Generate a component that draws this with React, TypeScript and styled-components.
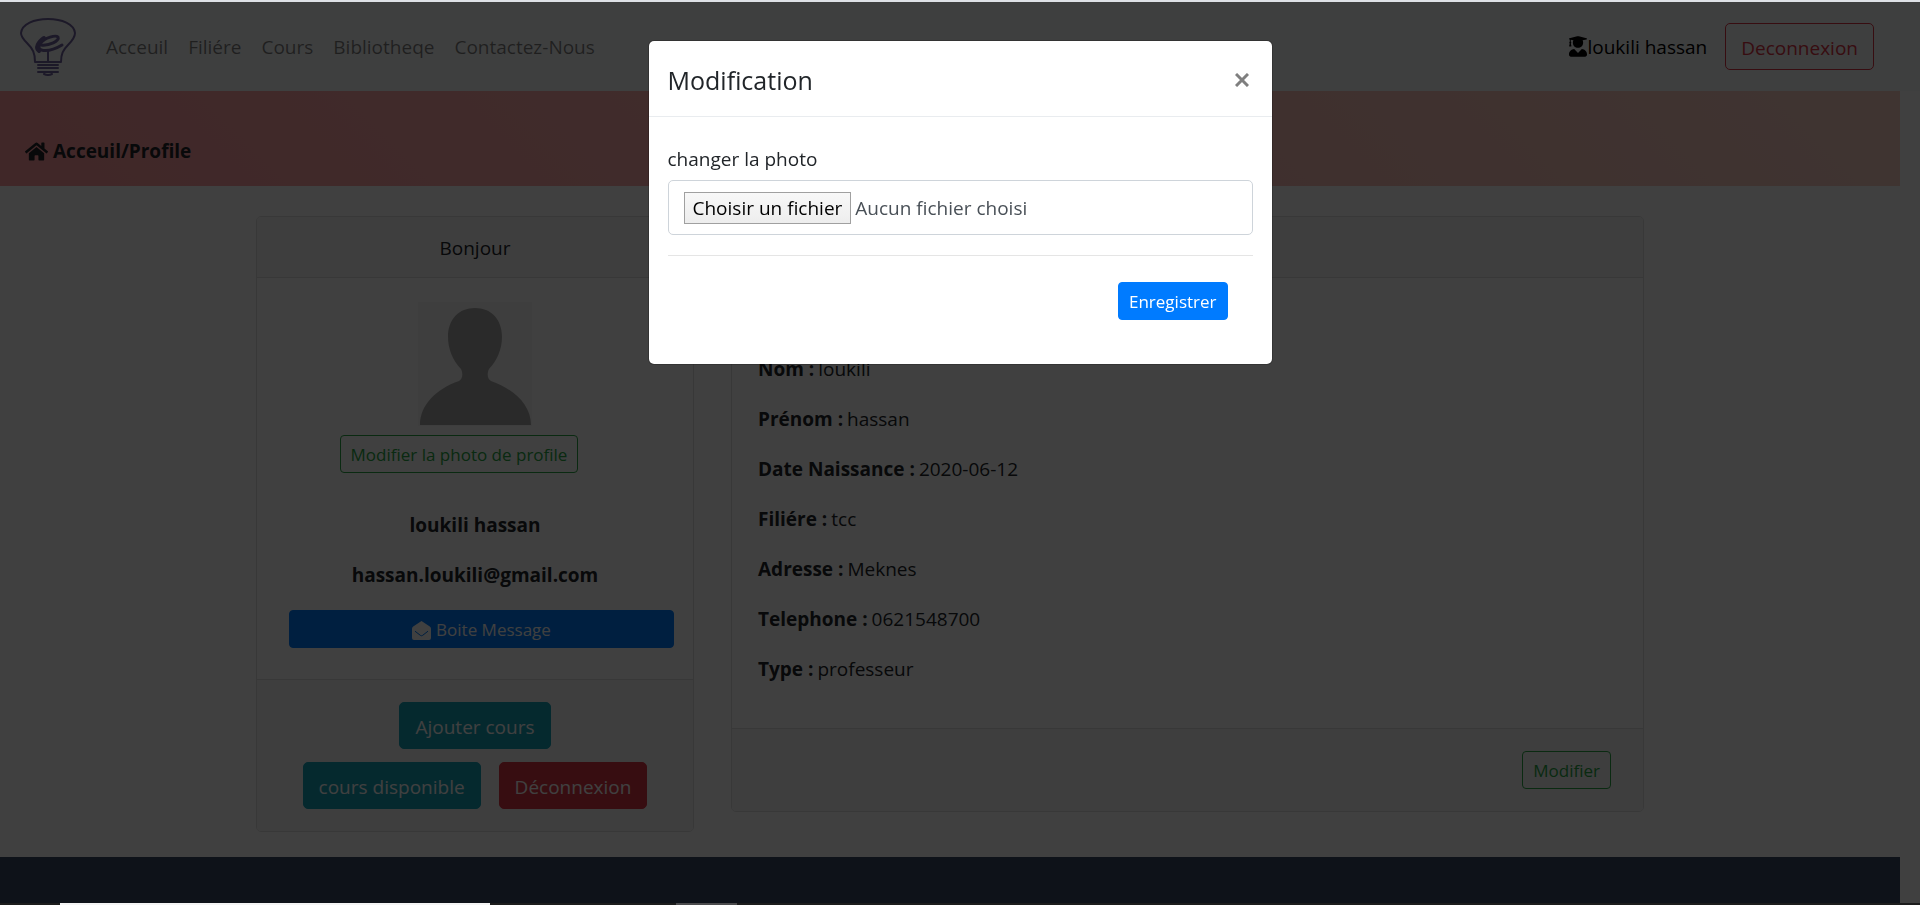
import React from "react";
import styled, { createGlobalStyle, css } from "styled-components";
import { FaHome, FaUserGraduate } from "react-icons/fa";

const GlobalStyle = createGlobalStyle`
  *, *::before, *::after { box-sizing: border-box; }
  body {
    margin: 0;
    background: #fff;
    color: #212529;
    font-family: "Open Sans", "Noto Sans", sans-serif;
    font-size: 19px;
    line-height: 30px;
  }
  p, h5 { margin: 0; }
  button, input { font-family: inherit; }
`;

const Page = styled.div`
  display: flex;
  flex-direction: column;
  min-height: 100vh;
`;

const TopEdge = styled.div`
  position: relative;
  z-index: 20;
  height: 2px;
  background: #dee1e6;
`;

const TaskEdge = styled.div`
  position: relative;
  z-index: 20;
  display: flex;
  height: 2px;
  padding-left: 60px;
  background: #1c1c1c;
`;

const TaskItem = styled.span<{ $width: number; $gap?: number; $color: string }>`
  width: ${(p) => p.$width}px;
  margin-left: ${(p) => p.$gap ?? 0}px;
  background: ${(p) => p.$color};
`;

const Navbar = styled.header`
  display: flex;
  align-items: center;
  height: 89px;
  padding: 0 46px 0 20px;
  background: #f8f9fa;
`;

const Brand = styled.a`
  display: flex;
  margin-right: 20px;
`;

const NavLinks = styled.nav`
  display: flex;
  flex: 1;
`;

const NavLink = styled.a`
  padding: 0 10px;
  color: rgba(0, 0, 0, 0.5);
  text-decoration: none;
`;

const UserLink = styled.a`
  display: flex;
  align-items: center;
  margin-right: 18px;
  color: #000;
  text-decoration: none;

  svg {
    width: 18px;
    height: 21px;
  }
`;

type Tone = "primary" | "info" | "danger" | "outlineDanger" | "outlineSuccess";

const tones = {
  primary: css`background: #007bff; border-color: #007bff; color: #fff;`,
  info: css`background: #17a2b8; border-color: #17a2b8; color: #fff;`,
  danger: css`background: #dc3545; border-color: #dc3545; color: #fff;`,
  outlineDanger: css`background: transparent; border-color: #dc3545; color: #dc3545;`,
  outlineSuccess: css`background: transparent; border-color: #28a745; color: #28a745;`,
};

const Button = styled.button<{ $tone: Tone; $small?: boolean }>`
  display: inline-flex;
  align-items: center;
  justify-content: center;
  gap: 5px;
  height: ${(p) => (p.$small ? 38 : 47)}px;
  padding: 2px ${(p) => (p.$small ? 10 : 15)}px 0;
  border: 1px solid;
  border-radius: ${(p) => (p.$small ? 4 : 5)}px;
  font-size: ${(p) => (p.$small ? 17 : 19)}px;
  line-height: 26px;
  white-space: nowrap;
  cursor: pointer;
  ${(p) => tones[p.$tone]}
`;

const Content = styled.div`
  display: flex;
  flex: 1;
  flex-direction: column;
  margin-right: 20px;
`;

const Banner = styled.div`
  display: flex;
  align-items: center;
  gap: 5px;
  padding: 45px 25px 20px;
  background: linear-gradient(45deg, #ff9a9e 0%, #fad0c4 99%, #fad0c4 100%);
  color: #212529;
  font-weight: 700;
`;

const Columns = styled.main`
  display: grid;
  grid-template-columns: 438fr 913fr;
  align-items: start;
  gap: 37px;
  width: 100%;
  max-width: 1388px;
  margin: 30px auto 25px;
`;

const Card = styled.section`
  border: 1px solid #dfdfdf;
  border-radius: 5px;
  overflow: hidden;
`;

const CardHeader = styled.div`
  height: 61px;
  padding: 16px 25px 14px;
  background: #f7f7f7;
  border-bottom: 1px solid #dfdfdf;
  text-align: center;
`;

const ProfileBody = styled.div`
  display: flex;
  flex-direction: column;
  align-items: center;
  padding: 24px 25px 31px;
`;

const PhotoAction = styled.div`
  display: flex;
  margin: 9px 32px 37px 0;
`;

const Strong = styled.p`
  margin-bottom: 20px;
  font-weight: 700;
`;

const MessageAction = styled.div`
  display: grid;
  align-self: stretch;
  margin: 0 -6px 0 7px;
`;

const CardFooter = styled.div<{ $align: "center" | "flex-end" }>`
  display: flex;
  flex-direction: column;
  align-items: ${(p) => p.$align};
  gap: 13px;
  padding: 22px 32px;
  background: #f7f7f7;
  border-top: 1px solid #dfdfdf;
`;

const ButtonRow = styled.div`
  display: flex;
  gap: 18px;
`;

const DetailsBody = styled.dl`
  display: grid;
  gap: 20px;
  margin: 0;
  padding: 76px 26px 44px;
`;

const Detail = styled.div`
  display: flex;
  gap: 4px;
`;

const DetailName = styled.dt`
  font-weight: 700;
`;

const DetailValue = styled.dd`
  margin: 0;
`;

const Footer = styled.footer`
  flex: 1;
  min-height: 46px;
  background: #3b4a66;
`;

const Backdrop = styled.div`
  position: fixed;
  inset: 0;
  z-index: 10;
  display: flex;
  align-items: flex-start;
  justify-content: center;
  padding-top: 40px;
  background: rgba(0, 0, 0, 0.75);
`;

const Modal = styled.div`
  width: 100%;
  max-width: 625px;
  background: #fff;
  background-clip: padding-box;
  border: 1px solid rgba(0, 0, 0, 0.2);
  border-radius: 6px;
`;

const ModalHeader = styled.div`
  display: flex;
  align-items: center;
  justify-content: space-between;
  height: 76px;
  padding: 3px 19px 0;
  border-bottom: 1px solid #e9ecef;
`;

const ModalTitle = styled.h5`
  font-size: 25px;
  font-weight: 500;
  line-height: 38px;
`;

const CloseButton = styled.button`
  display: flex;
  padding: 4px;
  border: 0;
  background: none;
  color: #7f7f7f;
  cursor: pointer;
`;

const ModalForm = styled.form`
  padding: 27px 19px 44px;
`;

const FieldLabel = styled.label`
  display: block;
  margin-bottom: 6px;
`;

const FileBox = styled.label`
  position: relative;
  display: flex;
  align-items: center;
  gap: 4px;
  height: 55px;
  padding: 0 15px;
  border: 1px solid #ced4da;
  border-radius: 5px;
  color: #495057;
  cursor: pointer;
`;

const FileInput = styled.input`
  position: absolute;
  inset: 0;
  width: 100%;
  opacity: 0;
  cursor: pointer;
`;

const FileTrigger = styled.span`
  height: 32px;
  padding: 0 8px;
  border: 1px solid #a0a0a0;
  background: linear-gradient(#f8f8f8, #ededed);
  color: #000;
`;

const ModalActions = styled.div`
  display: flex;
  justify-content: flex-end;
  margin-top: 20px;
  padding: 26px 25px 0;
  border-top: 1px solid #e5e5e5;
`;

const details: [string, string][] = [
  ["Nom :", "loukili"],
  ["Prénom :", "hassan"],
  ["Date Naissance :", "2020-06-12"],
  ["Filiére :", "tcc"],
  ["Adresse :", "Meknes"],
  ["Telephone :", "0621548700"],
  ["Type :", "professeur"],
];

const BulbLogo = () => (
  <svg width="56" height="58" viewBox="0 0 56 58" fill="none" stroke="#70639f" strokeLinecap="round" strokeLinejoin="round" aria-hidden="true">
    <path d="M15 44 H40 M15 44 C15 35 13 31 7 25 C3 21 1 18 1 15 C2 6 14 1 28 1 C42 1 54 6 55 15 C55 19 52 23 48 27 C43 32 41 36 41 44" strokeWidth="2" />
    <path d="M28 33 V44" strokeWidth="2" />
    <path d="M21 27 C29 28 40 23 38 19 C36 17 25 19 20 26 C15 33 27 36 42 27" strokeWidth="3" />
    <path d="M24 20 C18 24 15 30 19 33" strokeWidth="4" />
    <path d="M18 47 H38 M18 50 H38 M18 54 H38" strokeWidth="2" />
    <path d="M24 56 Q28 58 32 56" strokeWidth="2" />
  </svg>
);

const OpenEnvelope = () => (
  <svg width="19" height="19" viewBox="0 0 19 19" aria-hidden="true">
    <path d="M9.500 0 L17.800 5.600 Q19 6.400 19 7.800 V17 Q19 19 17 19 H2 Q0 19 0 17 V7.800 Q0 6.400 1.200 5.600 Z" fill="currentColor" />
    <path d="M3 10.200 L8.300 14.300 Q9.500 15.200 10.700 14.300 L16 10.200" fill="none" stroke="#007bff" strokeWidth="1" />
  </svg>
);

const Silhouette = () => (
  <svg width="114" height="124" viewBox="0 0 114 124" role="img" aria-label="Photo de profile">
    <rect width="114" height="124" fill="#f6f6f6" />
    <path
      d="M57 6 C73 6 84 17 84 35 C84 47 79 59 71 67 C69 71 69 77 73 79 C96 87 113 103 113 123 H2 C2 103 18 87 41 79 C45 77 45 71 43 67 C35 59 30 47 30 35 C30 17 41 6 57 6 Z"
      fill="#a8a8a8"
    />
  </svg>
);

export default function App() {
  return (
    <>
      <GlobalStyle />
      <Page>
        <TopEdge />
        <Navbar>
          <Brand href="#" aria-label="Acceuil">
            <BulbLogo />
          </Brand>
          <NavLinks>
            {["Acceuil", "Filiére", "Cours", "Bibliotheqe", "Contactez-Nous"].map((name) => (
              <NavLink key={name} href="#">{name}</NavLink>
            ))}
          </NavLinks>
          <UserLink href="#">
            <FaUserGraduate />
            loukili hassan
          </UserLink>
          <Button $tone="outlineDanger">Deconnexion</Button>
        </Navbar>

        <Content>
          <Banner>
            <FaHome size={23} />
            Acceuil/Profile
          </Banner>

          <Columns>
            <Card>
              <CardHeader>Bonjour</CardHeader>
              <ProfileBody>
                <Silhouette />
                <PhotoAction>
                  <Button $tone="outlineSuccess" $small>Modifier la photo de profile</Button>
                </PhotoAction>
                <Strong>loukili hassan</Strong>
                <Strong>hassan.loukili@gmail.com</Strong>
                <MessageAction>
                  <Button $tone="primary" $small>
                    <OpenEnvelope />
                    Boite Message
                  </Button>
                </MessageAction>
              </ProfileBody>
              <CardFooter $align="center">
                <Button $tone="info">Ajouter cours</Button>
                <ButtonRow>
                  <Button $tone="info">cours disponible</Button>
                  <Button $tone="danger">Déconnexion</Button>
                </ButtonRow>
              </CardFooter>
            </Card>

            <Card>
              <CardHeader />
              <DetailsBody>
                {details.map(([name, value]) => (
                  <Detail key={name}>
                    <DetailName>{name}</DetailName>
                    <DetailValue>{value}</DetailValue>
                  </Detail>
                ))}
              </DetailsBody>
              <CardFooter $align="flex-end">
                <Button $tone="outlineSuccess" $small>Modifier</Button>
              </CardFooter>
            </Card>
          </Columns>

          <Footer />
        </Content>
        <TaskEdge>
          <TaskItem $width={430} $color="#f4f4f4" />
          <TaskItem $width={61} $gap={186} $color="#4b4b4d" />
        </TaskEdge>
      </Page>

      <Backdrop>
        <Modal role="dialog" aria-modal="true" aria-labelledby="modal-title">
          <ModalHeader>
            <ModalTitle id="modal-title">Modification</ModalTitle>
            <CloseButton type="button" aria-label="Fermer">
              <svg width="14" height="14" viewBox="0 0 14 14" stroke="currentColor" strokeWidth="3" aria-hidden="true">
                <path d="M1 1 L13 13 M13 1 L1 13" />
              </svg>
            </CloseButton>
          </ModalHeader>
          <ModalForm>
            <FieldLabel htmlFor="photo">changer la photo</FieldLabel>
            <FileBox>
              <FileTrigger>Choisir un fichier</FileTrigger>
              Aucun fichier choisi
              <FileInput id="photo" type="file" />
            </FileBox>
            <ModalActions>
              <Button type="button" $tone="primary" $small>Enregistrer</Button>
            </ModalActions>
          </ModalForm>
        </Modal>
      </Backdrop>
    </>
  );
}
